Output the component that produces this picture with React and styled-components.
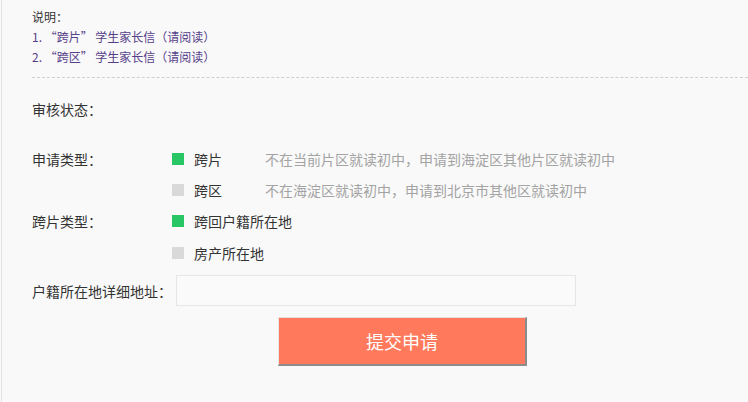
import React from "react";
import styled, { createGlobalStyle } from "styled-components";

const Global = createGlobalStyle`
  html, body { margin: 0; padding: 0; background: #f9f9f9; }
  body { font-family: "Microsoft YaHei", "Noto Sans CJK SC", "Noto Sans", sans-serif; }
`;

const Page = styled.div`
  margin-left: 1px;
  border-left: 1px solid #e4e4e4;
  background: #f9f9f9;
  min-height: 402px;
  box-sizing: border-box;
  padding: 7px 0 0 30px;
`;

const Notes = styled.div`
  font-size: 12px;
  line-height: 20px;
  padding-bottom: 10px;
  border-bottom: 1px dashed #cfcfcf;
`;

const NoteTitle = styled.div`
  color: #333;
`;

const NoteLink = styled.div`
  color: #56408a;
`;

const Form = styled.div`
  padding-top: 21px;
  display: flex;
  flex-direction: column;
`;

const Row = styled.div`
  display: flex;
  align-items: center;
  height: ${(p) => p.$h || 31}px;
  margin-top: ${(p) => p.$mt || 0}px;
`;

const Label = styled.div`
  width: 140px;
  flex: none;
  font-size: 14px;
  color: #333;
`;

const Check = styled.span`
  width: 12px;
  height: 12px;
  flex: none;
  background: ${(p) => (p.$on ? "#29c666" : "#d9d9d9")};
  margin-right: 10px;
`;

const OptText = styled.span`
  font-size: 14px;
  color: #333;
  width: ${(p) => (p.$w ? p.$w + "px" : "auto")};
`;

const Desc = styled.span`
  font-size: 14px;
  color: #a3a3a3;
`;

const Input = styled.input`
  width: 400px;
  height: 31px;
  box-sizing: border-box;
  margin-left: 4px;
  border: 1px solid #e6e6e6;
  background: #fafafa;
  outline: none;
`;

const ButtonRow = styled.div`
  display: flex;
  padding-left: 246px;
  margin-top: 11px;
`;

const Submit = styled.button`
  width: 249px;
  height: 49px;
  box-sizing: border-box;
  background: #ff7a5c;
  color: #fff;
  font-family: inherit;
  font-size: 18px;
  border-top: 1px solid #e6dcdc;
  border-left: 1px solid #e6e6e6;
  border-right: 2px solid #8c8c8c;
  border-bottom: 2px solid #8c8c8c;
  padding: 0;
`;

export default function App() {
  return (
    <>
      <Global />
      <Page>
        <Notes>
          <NoteTitle>说明：</NoteTitle>
          <NoteLink>1. “跨片” 学生家长信（请阅读）</NoteLink>
          <NoteLink>2. “跨区” 学生家长信（请阅读）</NoteLink>
        </Notes>
        <Form>
          <Row $h={20}>
            <Label>审核状态：</Label>
          </Row>
          <Row $mt={24}>
            <Label>申请类型：</Label>
            <Check $on />
            <OptText $w={71}>跨片</OptText>
            <Desc>不在当前片区就读初中，申请到海淀区其他片区就读初中</Desc>
          </Row>
          <Row>
            <Label />
            <Check />
            <OptText $w={71}>跨区</OptText>
            <Desc>不在海淀区就读初中，申请到北京市其他区就读初中</Desc>
          </Row>
          <Row $h={32}>
            <Label>跨片类型：</Label>
            <Check $on />
            <OptText>跨回户籍所在地</OptText>
          </Row>
          <Row>
            <Label />
            <Check />
            <OptText>房产所在地</OptText>
          </Row>
          <Row $h={31} $mt={7}>
            <Label>户籍所在地详细地址：</Label>
            <Input />
          </Row>
        </Form>
        <ButtonRow>
          <Submit>提交申请</Submit>
        </ButtonRow>
      </Page>
    </>
  );
}
